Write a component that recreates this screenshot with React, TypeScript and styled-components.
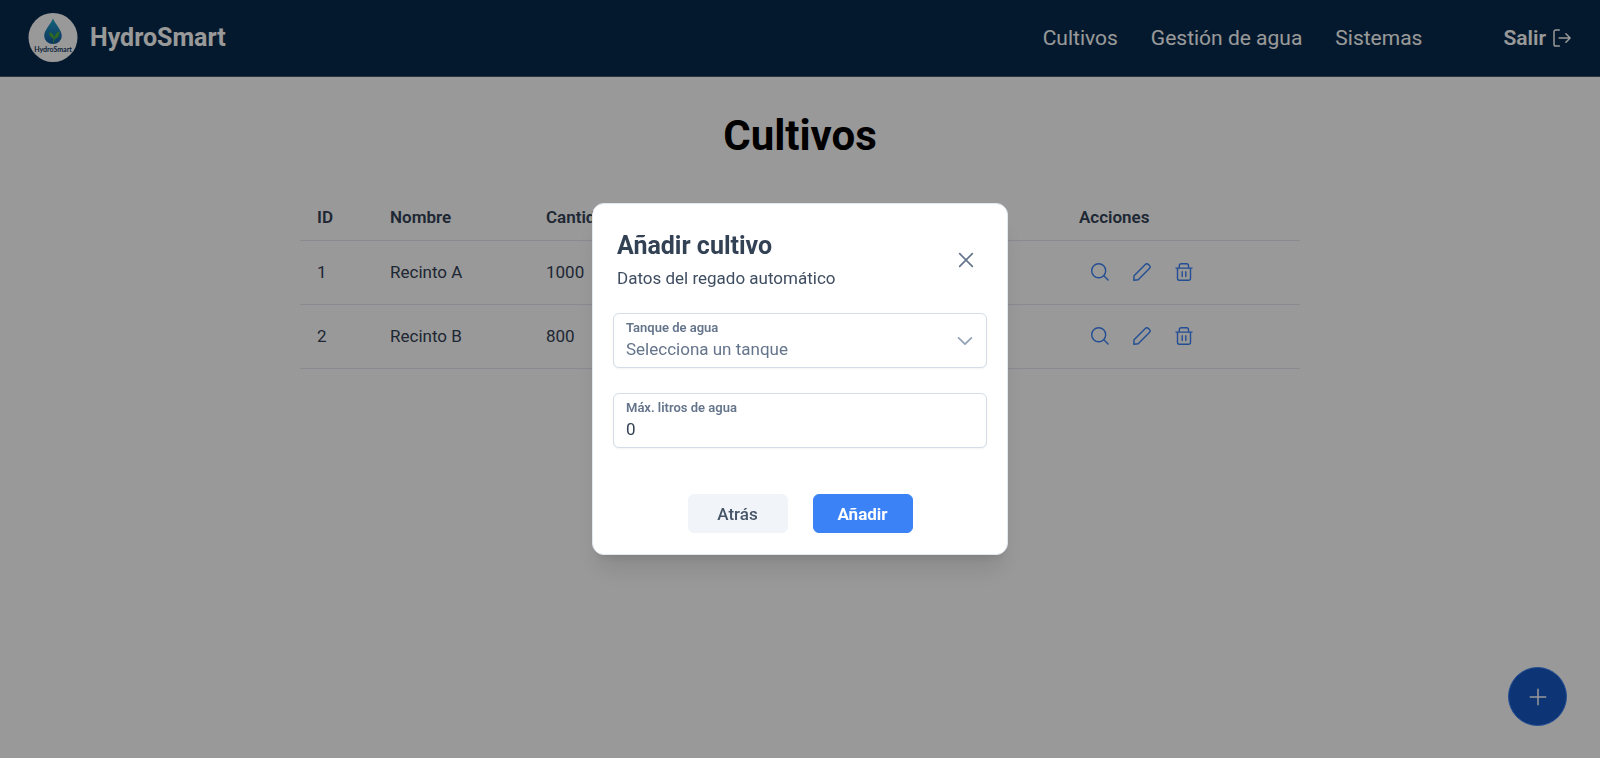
import React from "react";
import styled, { createGlobalStyle, css } from "styled-components";

const GlobalStyle = createGlobalStyle`
  *, *::before, *::after { box-sizing: border-box; }
  body {
    margin: 0;
    background: #ffffff;
    color: #334155;
    font-family: Roboto, "Liberation Sans", sans-serif;
    font-size: 17px;
    line-height: 24px;
  }
  button, input, select { font: inherit; color: inherit; }
`;

const Page = styled.div`
  min-height: 100vh;
`;

const Header = styled.header`
  display: flex;
  align-items: center;
  justify-content: space-between;
  height: 77px;
  padding: 0 29px 0 28px;
  background: #072b4d;
  border-bottom: 1px solid #475569;
`;

const Brand = styled.a`
  display: flex;
  align-items: center;
  gap: 12px;
  color: #ffffff;
  font-size: 25px;
  font-weight: 700;
  text-decoration: none;
`;

const Nav = styled.nav`
  display: flex;
  align-items: center;
  gap: 33px;
`;

const NavLink = styled.a`
  color: #ffffff;
  font-size: 21px;
  text-decoration: none;
`;

const LogoutButton = styled.button`
  display: flex;
  align-items: center;
  gap: 7px;
  margin-left: 48px;
  padding: 0;
  border: 0;
  background: none;
  color: #ffffff;
  font-size: 21px;
  font-weight: 600;
`;

const Main = styled.main`
  width: 100%;
  max-width: 1000px;
  margin: 0 auto;
  padding-top: 34px;
`;

const PageTitle = styled.h1`
  margin: 0 0 34px;
  color: #000000;
  font-size: 42px;
  line-height: 50px;
  font-weight: 700;
  text-align: center;
`;

const Table = styled.table`
  width: 100%;
  table-layout: fixed;
  border-collapse: collapse;
`;

const Column = styled.col<{ $width?: string }>`
  width: ${(p) => p.$width ?? "auto"};
`;

const cell = css`
  padding: 0 17px;
  border-bottom: 1px solid #e2e8f0;
  text-align: left;
`;

const HeadCell = styled.th`
  ${cell}
  height: 45px;
  font-weight: 600;
`;

const Cell = styled.td`
  ${cell}
  height: 64px;
`;

const Actions = styled.div`
  display: flex;
`;

const IconButton = styled.button`
  display: flex;
  align-items: center;
  justify-content: center;
  width: 42px;
  height: 42px;
  padding: 0;
  border: 0;
  border-radius: 6px;
  background: none;
  color: ${(p) => p.color ?? "#3b82f6"};
`;

const AddButton = styled.button`
  position: fixed;
  right: 33px;
  bottom: 32px;
  display: flex;
  align-items: center;
  justify-content: center;
  width: 59px;
  height: 59px;
  padding: 0;
  border: 1px solid #3b82f6;
  border-radius: 50%;
  background: #1757c2;
  color: #ffffff;
`;

const Overlay = styled.div`
  position: fixed;
  inset: 0;
  display: flex;
  align-items: center;
  justify-content: center;
  background: rgba(0, 0, 0, 0.4);
`;

const Dialog = styled.form`
  width: 416px;
  max-width: 90%;
  padding: 21px 20px;
  border: 1px solid #e2e8f0;
  border-radius: 12px;
  background: #ffffff;
  box-shadow: 0 20px 25px -5px rgba(0, 0, 0, 0.1), 0 8px 10px -6px rgba(0, 0, 0, 0.1);
`;

const DialogHeader = styled.div`
  display: flex;
  align-items: center;
  justify-content: space-between;
  padding: 5px 0 4px 4px;
  margin-bottom: 19px;
`;

const DialogTitle = styled.h2`
  margin: 0 0 4px;
  font-size: 25px;
  line-height: 32px;
  font-weight: 700;
`;

const DialogSubtitle = styled.p`
  margin: 0;
  color: #3f4d61;
`;

const Field = styled.div`
  position: relative;
  display: flex;
  flex-direction: column;
  height: 55px;
  margin-bottom: 25px;
  padding: 5px 12px;
  border: 1px solid #d3dce7;
  border-radius: 6px;
  background: #ffffff;
  box-shadow: 0 1px 2px rgba(18, 18, 23, 0.05);
`;

const FieldLabel = styled.label`
  color: #64748b;
  font-size: 13px;
  line-height: 18px;
  font-weight: 600;
`;

const control = css`
  width: 100%;
  height: 24px;
  padding: 0;
  border: 0;
  outline: 0;
  background: none;
`;

const Select = styled.select`
  ${control}
  appearance: none;
  color: #64748b;
`;

const Input = styled.input`
  ${control}
`;

const SelectArrow = styled.span`
  position: absolute;
  top: 0;
  right: 12px;
  bottom: 0;
  display: flex;
  align-items: center;
  color: #94a3b8;
  pointer-events: none;
`;

const DialogFooter = styled.div`
  display: flex;
  justify-content: center;
  gap: 25px;
  padding-top: 21px;
`;

const Button = styled.button<{ $primary?: boolean }>`
  width: 100px;
  height: 39px;
  padding: 0;
  border: 1px solid ${(p) => (p.$primary ? "#3b82f6" : "#f1f5f9")};
  border-radius: 6px;
  background: ${(p) => (p.$primary ? "#3b82f6" : "#f1f5f9")};
  color: ${(p) => (p.$primary ? "#ffffff" : "#475569")};
  font-weight: ${(p) => (p.$primary ? 700 : 500)};
`;

type IconProps = { size: number; stroke?: number; children: React.ReactNode };

const Icon = ({ size, stroke = 1.5, children }: IconProps) => (
  <svg
    width={size}
    height={size}
    viewBox="0 0 18 18"
    fill="none"
    stroke="currentColor"
    strokeWidth={stroke}
    strokeLinecap="round"
    strokeLinejoin="round"
    aria-hidden="true"
  >
    {children}
  </svg>
);

const SearchIcon = () => (
  <Icon size={18} stroke={1.4}>
    <circle cx="7.7" cy="7.7" r="7" />
    <path d="M12.8 12.8l4.3 4.3" />
  </Icon>
);

const PencilIcon = () => (
  <Icon size={18} stroke={1.4}>
    <path d="M.8 17.2l.3-4.500L12.300 1.500a2.200 2.200 0 0 1 3.100 0l1 1a2.200 2.200 0 0 1 0 3.100L5.200 16.800z" />
  </Icon>
);

const TrashIcon = () => (
  <Icon size={18} stroke={1.4}>
    <path d="M.9 5.100h16.200M2.500 5.100v10.300a1.800 1.800 0 0 0 1.800 1.800h9.400a1.800 1.800 0 0 0 1.800-1.800V5.100M4.300 5.100V2.600A1.800 1.800 0 0 1 6.100.8h5.600a1.800 1.800 0 0 1 1.800 1.800v2.500M7.200 8.800v4.700M10.800 8.800v4.700" />
  </Icon>
);

const LogoutIcon = () => (
  <Icon size={18} stroke={1.5}>
    <path d="M6.300 1H2.800A1.800 1.800 0 0 0 1 2.800v12.400A1.800 1.800 0 0 0 2.800 17h3.500M6.100 9h11M12.900 4.800L17.100 9l-4.200 4.200" />
  </Icon>
);

const CloseIcon = () => (
  <Icon size={18} stroke={1.7}>
    <path d="M2.700 2.700l12.600 12.600M15.300 2.700L2.700 15.300" />
  </Icon>
);

const ChevronDownIcon = () => (
  <Icon size={18} stroke={1.8}>
    <path d="M2.600 5.900L9 12.200l6.400-6.300" />
  </Icon>
);

const PlusIcon = () => (
  <Icon size={18} stroke={1.5}>
    <path d="M9 1.300v15.400M1.300 9h15.400" />
  </Icon>
);

const Logo = () => (
  <svg width="50" height="50" viewBox="0 0 50 50" aria-hidden="true">
    <defs>
      <linearGradient id="drop" x1="0" y1="0" x2="0" y2="1">
        <stop offset="0" stopColor="#22a4cc" />
        <stop offset="1" stopColor="#155a9c" />
      </linearGradient>
    </defs>
    <circle cx="25" cy="24.500" r="24.500" fill="#ffffff" />
    <path d="M25 5.500C22.500 11.500 16.200 17 16.200 23a8.800 8 0 0 0 17.600 0C33.800 17 27.500 11.500 25 5.500z" fill="url(#drop)" />
    <path d="M25.800 31c-.8-2.500-.6-4.500-.2-5.600-3-.8-4.400-2.900-4.400-6.100 2.800.5 4.800 2.300 5.100 5.100.6-3 2-5 5.200-6.200.2 4.200-1.500 6.800-4.700 7.600-.6 1.700-.8 3.500-1 5.200z" fill="#4cae3c" />
    <text x="25" y="39" textAnchor="middle" fontFamily="Lato, sans-serif" fontSize="7" fontWeight="700" fill="#123a63">
      HydroSmart
    </text>
  </svg>
);

const crops = [
  { id: 1, name: "Recinto A", amount: 1000 },
  { id: 2, name: "Recinto B", amount: 800 },
];

export default function App() {
  return (
    <Page>
      <GlobalStyle />
      <Header>
        <Brand href="#">
          <Logo />
          HydroSmart
        </Brand>
        <Nav>
          <NavLink href="#cultivos">Cultivos</NavLink>
          <NavLink href="#agua">Gestión de agua</NavLink>
          <NavLink href="#sistemas">Sistemas</NavLink>
          <LogoutButton type="button">
            Salir
            <LogoutIcon />
          </LogoutButton>
        </Nav>
      </Header>

      <Main>
        <PageTitle>Cultivos</PageTitle>
        <Table>
          <colgroup>
            <Column $width="73px" />
            <Column $width="156px" />
            <Column />
            <Column $width="238px" />
          </colgroup>
          <thead>
            <tr>
              <HeadCell>ID</HeadCell>
              <HeadCell>Nombre</HeadCell>
              <HeadCell>Cantidad</HeadCell>
              <HeadCell>Acciones</HeadCell>
            </tr>
          </thead>
          <tbody>
            {crops.map((crop) => (
              <tr key={crop.id}>
                <Cell>{crop.id}</Cell>
                <Cell>{crop.name}</Cell>
                <Cell>{crop.amount}</Cell>
                <Cell>
                  <Actions>
                    <IconButton type="button" aria-label="Ver"><SearchIcon /></IconButton>
                    <IconButton type="button" aria-label="Editar"><PencilIcon /></IconButton>
                    <IconButton type="button" aria-label="Eliminar"><TrashIcon /></IconButton>
                  </Actions>
                </Cell>
              </tr>
            ))}
          </tbody>
        </Table>
      </Main>

      <AddButton type="button" aria-label="Añadir cultivo"><PlusIcon /></AddButton>

      <Overlay>
        <Dialog role="dialog" aria-modal="true" aria-labelledby="dialog-title" onSubmit={(e) => e.preventDefault()}>
          <DialogHeader>
            <div>
              <DialogTitle id="dialog-title">Añadir cultivo</DialogTitle>
              <DialogSubtitle>Datos del regado automático</DialogSubtitle>
            </div>
            <IconButton type="button" color="#64748b" aria-label="Cerrar"><CloseIcon /></IconButton>
          </DialogHeader>
          <Field>
            <FieldLabel htmlFor="tank">Tanque de agua</FieldLabel>
            <Select id="tank" defaultValue="">
              <option value="">Selecciona un tanque</option>
            </Select>
            <SelectArrow><ChevronDownIcon /></SelectArrow>
          </Field>
          <Field>
            <FieldLabel htmlFor="liters">Máx. litros de agua</FieldLabel>
            <Input id="liters" inputMode="numeric" defaultValue="0" />
          </Field>
          <DialogFooter>
            <Button type="button">Atrás</Button>
            <Button type="submit" $primary>Añadir</Button>
          </DialogFooter>
        </Dialog>
      </Overlay>
    </Page>
  );
}
